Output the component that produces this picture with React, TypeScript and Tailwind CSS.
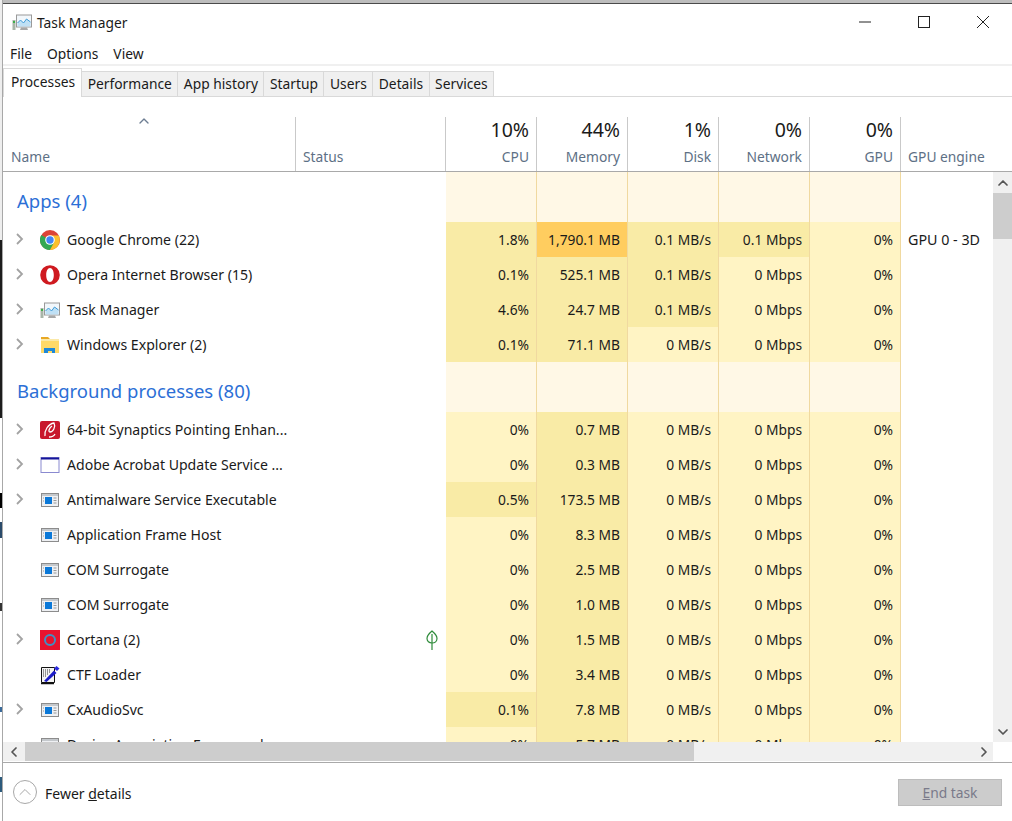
import { ChevronRight, ChevronUp, ChevronDown, ChevronLeft } from "lucide-react";
import type { ReactNode } from "react";

type Row = {
  name: string;
  icon: ReactNode;
  expand?: boolean;
  leaf?: boolean;
  cpu: [string, string];
  mem: string;
  disk: [string, string];
  net: [string, string];
  gpu: string;
  engine?: string;
};

const low = "bg-[#fff4c4]";
const mid = "bg-[#f9eba6]";

function TaskIcon() {
  return (
    <svg viewBox="0 0 20 20" className="size-5">
      <rect x="0.5" y="8" width="3" height="10" fill="#a9b5a9" />
      <rect x="1" y="9" width="2" height="2" fill="#3fae49" />
      <rect x="4.5" y="3" width="15" height="12" fill="#f2f7fb" stroke="#9a9a9a" />
      <path d="M5.5 11l3-3 3 3 3-4 4 3v4.500h-13z" fill="#bfe0f5" />
      <path d="M5.500 11l3-3 3 3 3-4 4 3" fill="none" stroke="#3d9bd8" strokeWidth="1" />
      <path d="M9 15.500h6l1 2.500H8z" fill="#a8a8a8" />
    </svg>
  );
}

function ChromeIcon() {
  return (
    <svg viewBox="0 0 20 20" className="size-5">
      <circle cx="10" cy="10" r="10" fill="#dc4437" />
      <path d="M10 10L1.300 5A10 10 0 0 0 10 20l5-8z" fill="#33a852" />
      <path d="M10 5.500h8.700A10 10 0 0 1 10 20l4.300-8z" fill="#fbc02d" />
      <circle cx="10" cy="10" r="4.800" fill="#fff" />
      <circle cx="10" cy="10" r="3.700" fill="#4285f4" />
    </svg>
  );
}

function OperaIcon() {
  return (
    <svg viewBox="0 0 20 20" className="size-5">
      <path
        fillRule="evenodd"
        d="M10 0.200a9.800 9.800 0 1 0 0 19.600a9.800 9.800 0 0 0 0-19.600zM10 3c2.300 0 3.800 3.200 3.800 7s-1.500 7-3.800 7s-3.800-3.200-3.800-7s1.500-7 3.800-7z"
        fill="#cf1a20"
      />
    </svg>
  );
}

function FolderIcon() {
  return (
    <svg viewBox="0 0 20 20" className="size-5">
      <path d="M1 2h7l2 2H1z" fill="#e8a825" />
      <rect x="1" y="4" width="18" height="14" fill="#ffd968" />
      <rect x="1" y="4" width="18" height="2" fill="#fbe9a8" />
      <path d="M4 18v-5h11v5h-3v-2H8v2z" fill="#1f88d8" />
    </svg>
  );
}

function SynapticsIcon() {
  return (
    <svg viewBox="0 0 20 20" className="size-5">
      <rect width="20" height="18" y="1" rx="2" fill="#c8172c" />
      <path
        d="M5 16c-1-5 3-12 9-13c2 4-1 9-4 9c-2 0-1-4 2-6M9 17c3 0 5-1 6-3"
        fill="none"
        stroke="#fff"
        strokeWidth="1.300"
      />
    </svg>
  );
}

function AdobeIcon() {
  return (
    <svg viewBox="0 0 20 20" className="size-5">
      <rect x="1" y="2.500" width="18" height="15" fill="#fff" stroke="#8a8ad0" />
      <rect x="1" y="2.500" width="18" height="2" fill="#15159a" />
    </svg>
  );
}

function ServiceIcon() {
  return (
    <svg viewBox="0 0 20 20" className="size-5">
      <rect x="1.500" y="3.500" width="17" height="13" fill="#eef0f3" stroke="#8c8c8c" />
      <rect x="2" y="4" width="16" height="2" fill="#c4c8cc" />
      <rect x="5" y="7" width="7" height="7" fill="#0a78d8" />
      <path d="M13.500 8h3M13.500 10.500h3M13.500 13h3M3 8h1M3 11h1" stroke="#9a9a9a" />
    </svg>
  );
}

function CortanaIcon() {
  return (
    <svg viewBox="0 0 20 20" className="size-5">
      <rect width="20" height="20" fill="#e8132e" />
      <circle cx="10" cy="10" r="5" fill="none" stroke="#3f8fc4" strokeWidth="2" />
    </svg>
  );
}

function CtfIcon() {
  return (
    <svg viewBox="0 0 20 20" className="size-5">
      <path d="M1.500 2.500h13v15h-13z" fill="#f4f4f4" stroke="#111" />
      <path d="M3 5h8M3 7h7M3 9h5M3 11h3" stroke="#333" strokeDasharray="1 1" />
      <path d="M4 16L14 5.500l2.500 2.500L6.500 17z" fill="#1c1cc8" />
      <path d="M14 3.500L16.500 1L19.500 3.500L17 6z" fill="#2a2ae0" />
      <path d="M1 18.500h13" stroke="#111" strokeWidth="1.500" />
    </svg>
  );
}

function LeafIcon() {
  return (
    <svg viewBox="0 0 12 20" className="h-5 w-3">
      <path d="M6 1C9 3.500 11 6 11 8.500C11 11 9 13 6 13C3 13 1 11 1 8.500C1 6 3 3.500 6 1z" fill="none" stroke="#2e8b3a" strokeWidth="1.200" />
      <path d="M6 4v16" stroke="#2e8b3a" strokeWidth="1.200" />
    </svg>
  );
}

const zero: [string, string] = ["0 MB/s", low];
const zeroNet: [string, string] = ["0 Mbps", low];

const apps: Row[] = [
  { name: "Google Chrome (22)", icon: <ChromeIcon />, expand: true, cpu: ["1.8%", mid], mem: "1,790.1 MB", disk: ["0.1 MB/s", mid], net: ["0.1 Mbps", mid], gpu: "0%", engine: "GPU 0 - 3D" },
  { name: "Opera Internet Browser (15)", icon: <OperaIcon />, expand: true, cpu: ["0.1%", mid], mem: "525.1 MB", disk: ["0.1 MB/s", mid], net: zeroNet, gpu: "0%" },
  { name: "Task Manager", icon: <TaskIcon />, expand: true, cpu: ["4.6%", mid], mem: "24.7 MB", disk: ["0.1 MB/s", mid], net: zeroNet, gpu: "0%" },
  { name: "Windows Explorer (2)", icon: <FolderIcon />, expand: true, cpu: ["0.1%", mid], mem: "71.1 MB", disk: zero, net: zeroNet, gpu: "0%" },
];

const background: Row[] = [
  { name: "64-bit Synaptics Pointing Enhan...", icon: <SynapticsIcon />, expand: true, cpu: ["0%", low], mem: "0.7 MB", disk: zero, net: zeroNet, gpu: "0%" },
  { name: "Adobe Acrobat Update Service ...", icon: <AdobeIcon />, expand: true, cpu: ["0%", low], mem: "0.3 MB", disk: zero, net: zeroNet, gpu: "0%" },
  { name: "Antimalware Service Executable", icon: <ServiceIcon />, expand: true, cpu: ["0.5%", mid], mem: "173.5 MB", disk: zero, net: zeroNet, gpu: "0%" },
  { name: "Application Frame Host", icon: <ServiceIcon />, cpu: ["0%", low], mem: "8.3 MB", disk: zero, net: zeroNet, gpu: "0%" },
  { name: "COM Surrogate", icon: <ServiceIcon />, cpu: ["0%", low], mem: "2.5 MB", disk: zero, net: zeroNet, gpu: "0%" },
  { name: "COM Surrogate", icon: <ServiceIcon />, cpu: ["0%", low], mem: "1.0 MB", disk: zero, net: zeroNet, gpu: "0%" },
  { name: "Cortana (2)", icon: <CortanaIcon />, expand: true, leaf: true, cpu: ["0%", low], mem: "1.5 MB", disk: zero, net: zeroNet, gpu: "0%" },
  { name: "CTF Loader", icon: <CtfIcon />, cpu: ["0%", low], mem: "3.4 MB", disk: zero, net: zeroNet, gpu: "0%" },
  { name: "CxAudioSvc", icon: <ServiceIcon />, expand: true, cpu: ["0.1%", mid], mem: "7.8 MB", disk: zero, net: zeroNet, gpu: "0%" },
  { name: "Device Association Framework ...", icon: <ServiceIcon />, cpu: ["0%", low], mem: "5.7 MB", disk: zero, net: zeroNet, gpu: "0%" },
];

function HeatCell({ value, bg }: { value: string; bg: string }) {
  return (
    <div className={`w-[91px] ${bg} flex shrink-0 items-center justify-end border-r border-[#f0d9a0] pr-[7px] pt-[1px] text-[#1a1a1a]`}>
      {value}
    </div>
  );
}

function ProcessRow({ row }: { row: Row }) {
  const hot = row.mem === "1,790.1 MB";
  return (
    <div className="flex h-[35px] text-[13.8px]">
      <div className="flex w-[292px] shrink-0 items-center">
        <div className="w-[13px] shrink-0" />
        <div className="flex w-[24px] shrink-0 pb-[2px]">
          {row.expand && (
            <svg viewBox="0 0 8 12" className="h-3 w-2">
              <path d="M1 1l5 5-5 5" fill="none" stroke="#a3a3a3" strokeWidth="1.800" />
            </svg>
          )}
        </div>
        <div className="flex w-[27px] shrink-0 items-center">{row.icon}</div>
        <span className="whitespace-nowrap text-[14.1px] text-[#1a1a1a]">{row.name}</span>
      </div>
      <div className="flex w-[151px] shrink-0 items-center justify-end pr-[8px]">{row.leaf && <LeafIcon />}</div>
      <HeatCell value={row.cpu[0]} bg={row.cpu[1]} />
      <HeatCell value={row.mem} bg={hot ? "bg-[#ffcd5f]" : mid} />
      <HeatCell value={row.disk[0]} bg={row.disk[1]} />
      <HeatCell value={row.net[0]} bg={row.net[1]} />
      <HeatCell value={row.gpu} bg={low} />
      <div className="flex flex-1 items-center pl-[7px] whitespace-nowrap text-[14.3px] text-[#1a1a1a]">{row.engine}</div>
    </div>
  );
}

function GroupRow({ label }: { label: string }) {
  return (
    <div className="flex h-[50px]">
      <div className="flex w-[443px] shrink-0 items-center pl-[14px] pt-[8px] text-[18.5px] text-[#2c6fd6]">
        <span className="whitespace-nowrap">{label}</span>
      </div>
      {[0, 1, 2, 3, 4].map((i) => (
        <div key={i} className="w-[91px] shrink-0 border-r border-[#f0d9a0] bg-[#fff8e6]" />
      ))}
    </div>
  );
}

function HeaderCell({ top, label }: { top: string; label: string }) {
  return (
    <div className="flex w-[91px] shrink-0 flex-col items-end border-r border-[#c9c9c9] pr-[7px]">
      <span className="text-[19.5px] leading-[26px] text-[#1a1a1a]">{top}</span>
      <span className="mt-[4px] text-[13.8px] leading-[20px] text-[#5d7085]">{label}</span>
    </div>
  );
}

const tabs = ["Performance", "App history", "Startup", "Users", "Details", "Services"];

export default function App() {
  return (
    <div className="flex h-[821px] w-[1012px] overflow-hidden bg-white font-['Noto_Sans','Open_Sans',sans-serif]">
      {/* desktop showing behind the window */}
      <div className="flex w-[2px] shrink-0 flex-col">
        <div className="h-[240px] bg-[#eeeeee]" />
        <div className="h-[178px] bg-[#1c1c1c]" />
        <div className="h-[75px] bg-white" />
        <div className="h-[15px] bg-black" />
        <div className="h-[14px] bg-white" />
        <div className="h-[16px] bg-[#2a4a6a]" />
        <div className="h-[65px] bg-white" />
        <div className="h-[8px] bg-[#333333]" />
        <div className="h-[96px] bg-white" />
        <div className="h-[5px] bg-[#3a6a9a]" />
        <div className="h-[65px] bg-white" />
        <div className="h-[15px] bg-[#2c5a7c]" />
        <div className="flex-1 bg-white" />
      </div>
      <div className="w-px shrink-0 bg-[#a8a8a8]" />

      <div className="flex min-w-0 flex-1 flex-col bg-white">
        <div className="h-[3px] shrink-0 bg-[#bdbdbd]" />
        <div className="h-px shrink-0 bg-[#4a4a4a]" />

        {/* title bar */}
        <div className="flex h-[36px] shrink-0 items-center pl-[9px] pt-[2px] text-[13.8px] text-[#1a1a1a]">
          <div className="mr-[5px] mb-[2px]">
            <TaskIcon />
          </div>
          <span>Task Manager</span>
          <div className="ml-auto mb-[2px] flex items-center gap-[47px] pr-[23px]">
            <svg viewBox="0 0 12 12" className="size-3">
              <path d="M0 6h12" stroke="#222" strokeWidth="1" />
            </svg>
            <svg viewBox="0 0 12 12" className="size-3">
              <rect x="0.500" y="0.500" width="11" height="11" fill="none" stroke="#222" strokeWidth="1" />
            </svg>
            <svg viewBox="0 0 12 12" className="size-3">
              <path d="M0 0l12 12M12 0L0 12" stroke="#222" strokeWidth="1" />
            </svg>
          </div>
        </div>

        {/* menu */}
        <div className="flex h-[24px] shrink-0 items-center gap-[15px] pl-[7px] pt-[4px] text-[13.8px] text-[#1a1a1a]">
          <span>File</span>
          <span>Options</span>
          <span>View</span>
        </div>
        <div className="h-[2px] shrink-0 bg-[#f0f0f0]" />

        {/* tabs */}
        <div className="mt-[3px] flex h-[28px] shrink-0 items-end border-b border-[#d9d9d9] text-[13.8px] text-[#1a1a1a]">
          <div className="z-10 mb-[-1px] flex h-[29px] items-center border-x border-t border-[#d9d9d9] bg-white pb-[1px] pl-[7px] pr-[6px]">Processes</div>
          {tabs.map((t) => (
            <div key={t} className="flex h-[25px] items-center border-r border-t border-[#d9d9d9] bg-[#f0f0f0] px-[5.5px] pt-[1px]">
              {t}
            </div>
          ))}
        </div>

        {/* header */}
        <div className="mt-[20px] flex h-[55px] shrink-0 border-b border-[#a9a9a9]">
          <div className="relative flex w-[293px] shrink-0 items-end border-r border-[#c9c9c9] pb-[3px] pl-[8px] text-[13.8px] text-[#5d7085]">
            <ChevronUp className="absolute left-[133px] top-[-4px] size-4 text-[#6d7d92]" strokeWidth={2} />
            Name
          </div>
          <div className="flex w-[150px] shrink-0 items-end border-r border-[#c9c9c9] pb-[3px] pl-[7px] text-[13.8px] text-[#5d7085]">Status</div>
          <HeaderCell top="10%" label="CPU" />
          <HeaderCell top="44%" label="Memory" />
          <HeaderCell top="1%" label="Disk" />
          <HeaderCell top="0%" label="Network" />
          <HeaderCell top="0%" label="GPU" />
          <div className="flex flex-1 items-end whitespace-nowrap pb-[3px] pl-[7px] text-[13.8px] text-[#5d7085]">GPU engine</div>
        </div>

        {/* table and vertical scrollbar */}
        <div className="flex h-[570px] shrink-0">
          <div className="min-w-0 flex-1 overflow-hidden">
            <GroupRow label="Apps (4)" />
            {apps.map((r) => (
              <ProcessRow key={r.name} row={r} />
            ))}
            <GroupRow label="Background processes (80)" />
            {background.map((r, i) => (
              <ProcessRow key={i} row={r} />
            ))}
          </div>
          <div className="flex w-[19px] shrink-0 flex-col bg-[#f0f0f0]">
            <div className="flex h-[21px] items-center justify-center">
              <ChevronUp className="size-4 text-[#555]" strokeWidth={2.6} />
            </div>
            <div className="h-[46px] bg-[#cdcdcd]" />
            <div className="flex-1" />
            <div className="flex h-[21px] items-center justify-center">
              <ChevronDown className="size-4 text-[#555]" strokeWidth={2.6} />
            </div>
          </div>
        </div>

        {/* horizontal scrollbar */}
        <div className="flex h-[21px] shrink-0 border-b border-[#a9a9a9]">
          <div className="flex flex-1 border-b border-white bg-[#f0f0f0]">
            <div className="flex w-[22px] items-center justify-center">
              <ChevronLeft className="size-4 text-[#555]" strokeWidth={2.6} />
            </div>
            <div className="w-[669px] bg-[#cdcdcd]" />
            <div className="flex-1" />
            <div className="flex w-[19px] items-center justify-center">
              <ChevronRight className="size-4 text-[#555]" strokeWidth={2.6} />
            </div>
          </div>
          <div className="w-[19px] bg-white" />
        </div>

        {/* footer */}
        <div className="flex flex-1 items-center pl-[10px] pr-[10px] text-[13.8px] text-[#1a1a1a]">
          <div className="flex size-[24px] items-center justify-center rounded-full border border-[#a8a8a8]">
            <ChevronUp className="size-5 text-[#a8a8a8]" strokeWidth={1.2} />
          </div>
          <span className="ml-[8px] pt-[3px] text-[14px]">
            Fewer <span className="underline">d</span>etails
          </span>
          <div className="ml-auto flex h-[27px] w-[104px] items-center justify-center border border-[#bdbdbd] bg-[#cccccc] pt-[2px] text-[#7a7a8a]">
            <span>
              <span className="underline">E</span>nd task
            </span>
          </div>
        </div>
      </div>
    </div>
  );
}
